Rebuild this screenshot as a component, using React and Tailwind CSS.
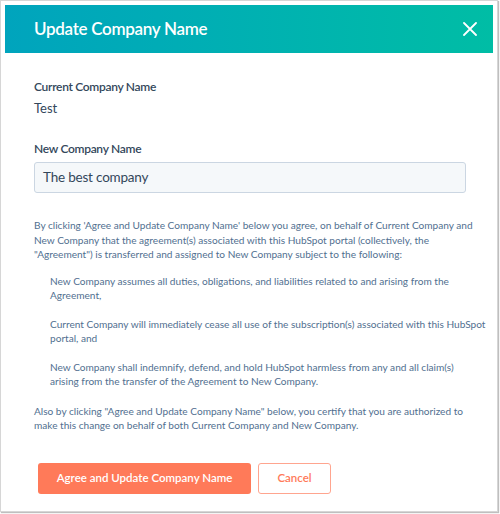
import React from "react";

export default function App() {
  const font = { fontFamily: "Lato, 'Noto Sans', sans-serif" };
  return (
    <div className="w-[500px] h-[514px] bg-white" style={font}>
      <div className="w-[498px] h-[512px] border border-[#d6d6d6] bg-white p-[4px] shadow-[1px_1px_1px_rgba(0,0,0,0.25)]">
        <div className="h-[48px] bg-gradient-to-r from-[#00a4bd] to-[#00bda5] flex items-center justify-between pl-[29px] pr-[16px]">
          <h1 className="text-white text-[17px] font-semibold tracking-[-0.3px]">Update Company Name</h1>
          <svg width="14" height="14" viewBox="0 0 14 14">
            <path d="M1 1 L13 13 M13 1 L1 13" stroke="white" strokeWidth="1.8" strokeLinecap="round" />
          </svg>
        </div>
        <div className="pl-[29px] pr-[10px] pt-[25px]">
          <div className="text-[12px] font-semibold text-[#33475b] leading-[18px] tracking-[-0.3px]">Current Company Name</div>
          <div className="mt-[3px] text-[13px] text-[#33475b] leading-[18px]">Test</div>
          <div className="mt-[23px] text-[12px] font-semibold text-[#33475b] leading-[18px] tracking-[-0.3px]">New Company Name</div>
          <div className="mt-[4px] h-[31px] w-[432px] bg-[#f5f8fa] border border-[#cbd6e2] rounded-[3px] flex items-center px-[8px] text-[13.5px] tracking-[-0.2px] text-[#33475b]">
            The best company
          </div>
          <div className="mt-[25px] text-[10.1px] leading-[14.5px] text-[#516f90] whitespace-nowrap">
            <p>By clicking 'Agree and Update Company Name' below you agree, on behalf of Current Company and<br />New Company that the agreement(s) associated with this HubSpot portal (collectively, the<br />"Agreement") is transferred and assigned to New Company subject to the following:</p>
            <p className="mt-[12px] pl-[16px]">New Company assumes all duties, obligations, and liabilities related to and arising from the<br />Agreement,</p>
            <p className="mt-[14px] pl-[16px]">Current Company will immediately cease all use of the subscription(s) associated with this HubSpot<br />portal, and</p>
            <p className="mt-[14px] pl-[16px]">New Company shall indemnify, defend, and hold HubSpot harmless from any and all claim(s)<br />arising from the transfer of the Agreement to New Company.</p>
            <p className="mt-[15px]">Also by clicking "Agree and Update Company Name" below, you certify that you are authorized to<br />make this change on behalf of both Current Company and New Company.</p>
          </div>
          <div className="mt-[30px] pl-[4px] flex gap-[7px]">
            <button className="h-[31px] w-[213px] bg-[#ff7a59] rounded-[3px] text-white text-[11.5px] font-semibold">Agree and Update Company Name</button>
            <button className="h-[31px] w-[73px] bg-white border border-[#ffa58f] rounded-[3px] text-[#ff7a59] text-[11.5px] font-semibold">Cancel</button>
          </div>
        </div>
      </div>
    </div>
  );
}
